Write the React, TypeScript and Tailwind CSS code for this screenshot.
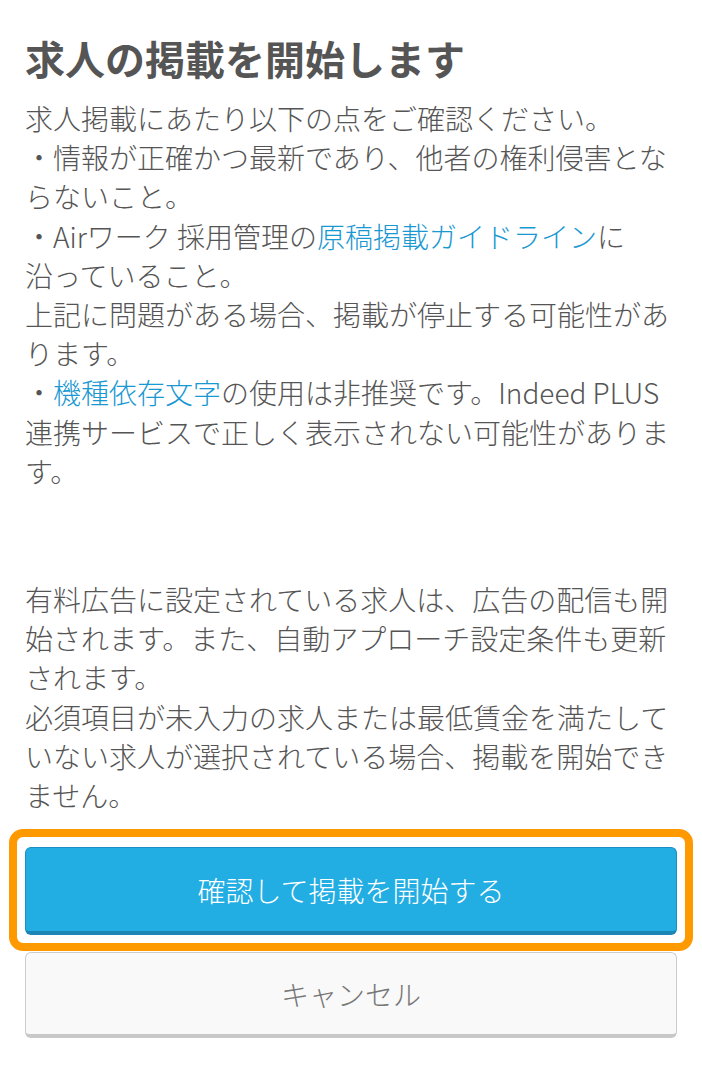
const font = "font-['Noto_Sans_CJK_JP','Noto_Sans',sans-serif]";

const Link = ({ children }: { children: React.ReactNode }) => (
  <a href="#" className="text-[#1a98d1]">
    {children}
  </a>
);

export default function App() {
  return (
    <main className={`${font} min-h-screen w-full bg-white px-[25px] pt-[34px] text-[#555555]`}>
      <h1 className="mb-[17px] text-[40px] font-bold leading-[48px]">求人の掲載を開始します</h1>

      <p className="text-[28px] font-light leading-[39.2px]">
        求人掲載にあたり以下の点をご確認ください。
        <br />
        ・情報が正確かつ最新であり、他者の権利侵害とならないこと。
        <br />
        ・Airワーク 採用管理の<Link>原稿掲載ガイドライン</Link>に
        <br />
        沿っていること。
        <br />
        上記に問題がある場合、掲載が停止する可能性があります。
        <br />
        ・<Link>機種依存文字</Link>の使用は非推奨です。Indeed PLUS連携サービスで正しく表示されない可能性があります。
      </p>

      <p className="mt-[89px] text-[28px] font-light leading-[39.2px]">
        有料広告に設定されている求人は、広告の配信も開始されます。また、自動アプローチ設定条件も更新されます。
        <br />
        必須項目が未入力の求人または最低賃金を満たしていない求人が選択されている場合、掲載を開始できません。
      </p>

      <div className="mt-[32px] flex flex-col gap-[17px]">
        <div className="relative">
          <button
            type="button"
            className="flex h-[88px] w-full items-center justify-center rounded-[6px] border border-b-[4px] border-[#1a8fc3] border-b-[#1b86b6] bg-[#22ade3] text-[28px] font-light text-white"
          >
            確認して掲載を開始する
          </button>
          {/* highlight ring around the primary action */}
          <div className="pointer-events-none absolute -top-[18px] -bottom-[16px] -left-[16px] -right-[16px] rounded-[14px] border-[8px] border-[#ff9900]" />
        </div>
        <button
          type="button"
          className="flex h-[86px] w-full items-center justify-center rounded-[6px] border border-b-[4px] border-[#cccccc] border-b-[#c8c8c8] bg-[#f9f9f9] text-[28px] font-light text-[#777777]"
        >
          キャンセル
        </button>
      </div>
    </main>
  );
}
